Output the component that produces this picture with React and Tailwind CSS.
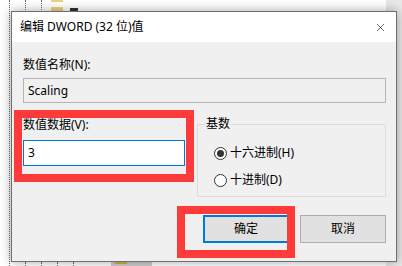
import { X } from 'lucide-react';

const font = { fontFamily: '"Noto Sans", "Noto Sans CJK SC", sans-serif' };

function Radio({ checked, label }) {
  return (
    <label className="flex items-center gap-[3px] h-[16px]">
      <span className="w-[13px] h-[13px] rounded-full border border-[#333] bg-white flex items-center justify-center">
        {checked && <span className="w-[7px] h-[7px] rounded-full bg-[#333]" />}
      </span>
      <span>{label}</span>
    </label>
  );
}

function Backdrop() {
  return (
    <div className="absolute inset-0 bg-white">
      {/* tree guide lines */}
      <div className="absolute left-[9px] top-0 h-[266px] border-l border-dotted border-[#666]" />
      <div className="absolute left-[25px] top-0 h-[12px] border-l border-dotted border-[#666]" />
      <div className="absolute left-[41px] top-0 h-[12px] border-l border-dotted border-[#666]" />
      <div className="absolute left-[51px] top-0 w-[12px] h-[2px] bg-[#f0d07a]" />
      <div className="absolute left-[51px] top-[7px] w-[12px] h-[6px] bg-[#f0d07a]" />
      <div className="absolute left-[70px] top-[8px] w-[8px] h-[3px] bg-[#333]" />
      {/* scrollbar */}
      <div className="absolute right-0 top-0 w-[16px] h-[266px] bg-[#e8e8e8]" />
      {/* bottom row */}
      <div className="absolute left-[25px] top-[262px] h-[4px] border-l border-dotted border-[#666]" />
      <div className="absolute left-[41px] top-[262px] h-[4px] border-l border-dotted border-[#666]" />
      <div className="absolute left-[57px] top-[262px] h-[4px] border-l border-dotted border-[#666]" />
      <div className="absolute left-[73px] top-[262px] h-[4px] border-l border-dotted border-[#666]" />
      <div className="absolute left-[111px] top-[262px] w-[41px] h-[4px] bg-[#cfcfcf]" />
      <div className="absolute left-[115px] top-[262px] w-[12px] h-[2px] bg-[#d9b040]" />
    </div>
  );
}

export default function App() {
  return (
    <div className="relative w-[402px] h-[266px] overflow-hidden text-[12px] text-black" style={font}>
      <Backdrop />

      {/* Dialog window */}
      <div className="absolute left-[11px] top-[11px] w-[386px] h-[251px] border border-[#6f6f6f] bg-[#f0f0f0] shadow-[0_0_10px_rgba(0,0,0,0.35)] flex flex-col">
        {/* Title bar */}
        <div className="h-[30px] bg-white flex items-center justify-between pl-[8px] pr-[9px] shrink-0">
          <span className="leading-[16px]">编辑 DWORD (32 位)值</span>
          <X className="w-[13px] h-[13px] text-[#222]" strokeWidth={1.2} />
        </div>

        {/* Body */}
        <div className="flex-1 pl-[11px] pr-[10px] pt-[15px] flex flex-col">
          <div className="leading-[16px]">数值名称(N):</div>
          <div className="mt-[5px] h-[25px] border border-[#b4b4b4] bg-[#f0f0f0] flex items-center px-[4px]">
            Scaling
          </div>

          <div className="mt-[14px] flex gap-[12px]">
            <div className="w-[162px] flex flex-col">
              <div className="leading-[16px]">数值数据(V):</div>
              <div className="mt-[7px] h-[26px] border border-[#0078d7] bg-white flex items-center px-[4px]">
                3
              </div>
            </div>

            <div className="relative flex-1 mt-[7px] h-[73px] border border-[#dcdcdc] rounded-[1px]">
              <span className="absolute left-[7px] top-[-9px] px-[1px] bg-[#f0f0f0] leading-[16px]">基数</span>
              <div className="pl-[16px] pt-[20px] flex flex-col gap-[11px]">
                <Radio checked label="十六进制(H)" />
                <Radio label="十进制(D)" />
              </div>
            </div>
          </div>

          <div className="mt-[18px] flex justify-end gap-[11px]">
            <button className="w-[86px] h-[28px] bg-[#e1e1e1] border-2 border-[#0078d7]">确定</button>
            <button className="w-[86px] h-[28px] bg-[#e1e1e1] border border-[#adadad]">取消</button>
          </div>
        </div>

        {/* Red annotation boxes */}
        <div className="pointer-events-none absolute left-[2px] top-[98px] w-[180px] h-[72px] border-[8px] border-[#fe3a3a]" />
        <div className="pointer-events-none absolute left-[165px] top-[194px] w-[118px] h-[52px] border-[8px] border-[#fe3a3a]" />
      </div>
    </div>
  );
}
